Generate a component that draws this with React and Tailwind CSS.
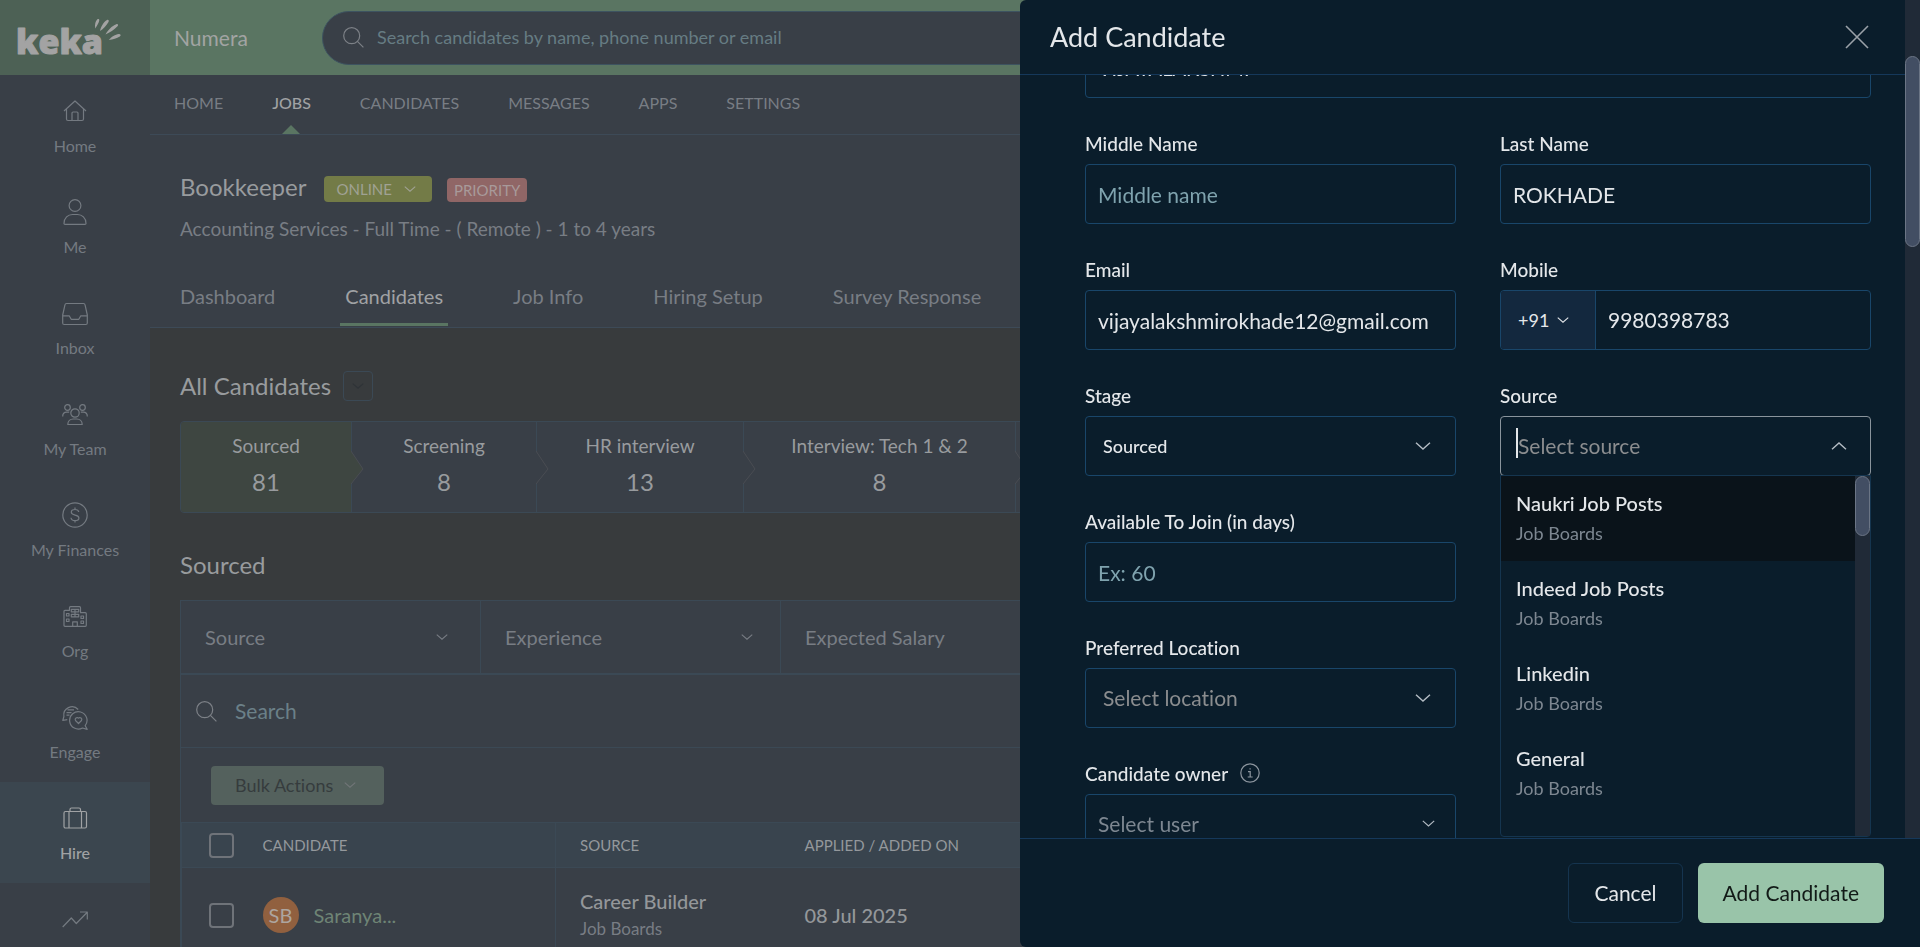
import React from 'react';

const Chevron = ({ up = false, className = 'w-4 h-2' }) => (
  <svg viewBox="0 0 16 8" fill="none" stroke="currentColor" strokeWidth="1.4" className={className} aria-hidden="true">
    <path d={up ? 'M1 7.2L8 1l7 6.2' : 'M1 .8L8 7l7-6.2'} />
  </svg>
);

const SearchIcon = () => (
  <svg viewBox="0 0 21 21" fill="none" stroke="currentColor" strokeWidth="1.2" className="w-[21px] h-[21px] text-[#7d8187] shrink-0" aria-hidden="true">
    <circle cx="8.7" cy="8.7" r="8" />
    <path d="M14.4 14.4L20.4 20.4" />
  </svg>
);

const NavIcon = ({ children }) => (
  <svg viewBox="0 0 26 26" fill="none" stroke="currentColor" strokeWidth="1.2" strokeLinejoin="round" className="w-[26px] h-[26px]" aria-hidden="true">
    {children}
  </svg>
);

const sideItems = [
  {
    label: 'Home',
    icon: (
      <>
        <path d="M2 13L13 3l11 10" />
        <path d="M4.5 11v10q0 1.5 1.5 1.5h14q1.500 0 1.500-1.500V11" />
        <path d="M10 22.500v-7.500q0-1 1-1h4q1 0 1 1v7.500" />
      </>
    ),
  },
  {
    label: 'Me',
    icon: (
      <>
        <circle cx="13" cy="6.500" r="5.900" />
        <path d="M2 24.500c0-5.500 4-9 8.500-9h5c4.500 0 8.500 3.500 8.500 9q0 .8-1 .8H3q-1 0-1-.8z" />
      </>
    ),
  },
  {
    label: 'Inbox',
    icon: (
      <>
        <path d="M4.500 3.500h17q1.300 0 1.500 1.200L25.300 15v8q0 1.500-1.500 1.500H2.200Q.7 24.500.7 23v-8L3 4.700q.2-1.200 1.500-1.200z" />
        <path d="M.7 15.800h6.500l2 3.500h7.600l2-3.500h6.500" />
      </>
    ),
  },
  {
    label: 'My Team',
    icon: (
      <>
        <circle cx="13" cy="12" r="4.200" />
        <circle cx="5.500" cy="6.500" r="2.800" />
        <circle cx="20.500" cy="6.500" r="2.800" />
        <path d="M.7 15.500c0-2.700 1.800-4.300 4-4.300h2.500M25.300 15.500c0-2.700-1.800-4.300-4-4.300h-2.500" />
        <path d="M5.800 23.500c0-3.500 2.500-5.500 5.500-5.500h3.400c3 0 5.500 2 5.500 5.500z" />
      </>
    ),
  },
  {
    label: 'My Finances',
    icon: (
      <>
        <circle cx="13" cy="13" r="12.200" />
        <path d="M16.800 10c-.3-1.700-1.800-2.500-3.800-2.500s-3.700 1-3.700 2.700c0 4 7.600 1.700 7.600 5.700 0 1.700-1.700 2.700-3.900 2.700s-3.800-1-4-2.800M13 5.500v2M13 18.600v2" />
      </>
    ),
  },
  {
    label: 'Org',
    icon: (
      <>
        <path d="M7.500 6.500V4.700q0-1 1-1h9q1 0 1 1v5h4.800q1 0 1 1v11.600q0 1-1 1H3q-1 0-1-1V8.500q0-1.200 1-1.200h4.500z" />
        <path d="M9.300 6.300h7.400v2.500H9.300zM9.300 11.300h7.400v2.500H9.300zM13 6.300v7.500M4.500 10.500h2.500v2.500H4.500zM4.500 16h2.500v2.500H4.500zM19 13h2.500v2.500H19zM19 18h2.500v2.500H19zM10.700 23.300v-4.500h4.600v4.500" />
      </>
    ),
  },
  {
    label: 'Engage',
    icon: (
      <>
        <path d="M16.200 5.500A8.300 8.300 0 0 0 1.900 12.500L.8 16.300l4.500-.6" />
        <path d="M5.500 5.800h6.500M4.500 8.600h5M4.500 11.200h3" />
        <path d="M23.200 21.700A8.700 8.700 0 1 0 20.500 24l4.700 1.300z" />
        <path d="M16.500 19.500l-3-3a1.900 1.900 0 0 1 3-2.300 1.900 1.900 0 0 1 3 2.300z" />
      </>
    ),
  },
  {
    label: 'Hire',
    active: true,
    icon: (
      <>
        <rect x="2" y="6.500" width="22.500" height="16.500" rx="1.500" />
        <path d="M7 6.500V23M19.500 6.500V23M8 6.500v-2q0-1.500 1.500-1.500h7.500q1.500 0 1.500 1.500v2" />
      </>
    ),
  },
  {
    label: '',
    icon: <path d="M.7 21l8.600-9 5 5.500L25 6.500M18 6h7.300v7.500" />,
  },
];

const mainNav = ['HOME', 'JOBS', 'CANDIDATES', 'MESSAGES', 'APPS', 'SETTINGS'];
const jobTabs = ['Dashboard', 'Candidates', 'Job Info', 'Hiring Setup', 'Survey Response'];

const stages = [
  { name: 'Sourced', count: 81 },
  { name: 'Screening', count: 8 },
  { name: 'HR interview', count: 13 },
  { name: 'Interview: Tech 1 & 2', count: 8 },
  { name: 'Offer', count: 2 },
];

const filters = ['Source', 'Experience', 'Expected Salary'];
const sources = ['Naukri Job Posts', 'Indeed Job Posts', 'Linkedin', 'General'];

function Logo() {
  return (
    <svg viewBox="0 0 150 75" className="w-[150px] h-[75px]" role="img" aria-label="keka">
      <text x="16" y="54" fontFamily="Open Sans" fontWeight="800" fontSize="34" fill="#a3a3a3" stroke="#a3a3a3" strokeWidth="1" strokeLinejoin="round">
        keka
      </text>
      <g fill="#a3a3a3">
        <path d="M95.200 28.500c-.6-4 .3-7.500 2-9 1.200-1 2.400-.2 2 1.200-.6 2.600-2.200 5-4 7.800z" />
        <path d="M100 31c1-4.500 3.800-9.500 7-11 1.500-.6 2.300.6 1.500 1.900C106.500 25.500 103.500 28.500 100 31z" />
        <path d="M105.500 34.500c2-4 6.500-8.800 10.800-10.300 1.800-.5 2.300 1 1.200 2.100-3.500 3.500-7.500 6.200-12 8.200z" />
        <path d="M108.800 40c2.400-3 6.500-5.700 10-6 2-.1 2.400 1.700 1 2.600-3 1.900-6.800 3.200-11 3.400z" />
      </g>
    </svg>
  );
}

function Sidebar() {
  return (
    <aside className="w-[150px] shrink-0 bg-[#393f47] flex flex-col">
      <div className="bg-[#4d6155] h-[75px] shrink-0">
        <Logo />
      </div>
      <nav className="flex flex-col">
        {sideItems.map((item, i) => (
          <a
            key={i}
            href="#"
            aria-label={item.label || 'Performance'}
            className={`h-[101px] shrink-0 flex flex-col items-center gap-[9px] pt-[23px] text-base leading-[26px] ${
              item.active ? 'bg-[#3b464f] text-[#a0a2a4] font-medium' : 'text-[#747a81]'
            }`}
          >
            <NavIcon>{item.icon}</NavIcon>
            <span>{item.label}</span>
          </a>
        ))}
      </nav>
    </aside>
  );
}

function TopBar() {
  return (
    <header className="h-[75px] shrink-0 bg-[#5a7562] flex items-center pl-6">
      <div className="w-[148px] text-[21px] leading-7 text-[#a2a4a3]">Numera</div>
      <label className="flex-1 mr-8 h-[54px] rounded-full border border-[#3d5360] bg-[#393f47] flex items-center gap-[13px] pl-5">
        <SearchIcon />
        <input
          type="text"
          placeholder="Search candidates by name, phone number or email"
          className="flex-1 bg-transparent outline-none text-[18px] placeholder:text-[#667c83]"
        />
      </label>
    </header>
  );
}

function JobHeader() {
  return (
    <div className="bg-[#393f47] shrink-0">
      <nav className="h-[60px] border-b border-[#3d4a57] flex gap-[49px] px-6 text-base leading-[56px]">
        {mainNav.map((name) => (
          <a key={name} href="#" className={`relative ${name === 'JOBS' ? 'text-[#a0a2a4] font-medium' : 'text-[#787d84]'}`}>
            {name}
            {name === 'JOBS' && (
              <span className="absolute bottom-0 inset-x-0 mx-auto w-0 h-0 border-x-9 border-x-transparent border-b-9 border-b-[#5a7562]" />
            )}
          </a>
        ))}
      </nav>

      <div className="h-[193px] border-b border-[#3d4a57] pl-[30px] flex flex-col">
        <div className="mt-9 flex items-end">
          <h1 className="text-[24px] leading-8 text-[#989b9e] mr-[18px]">Bookkeeper</h1>
          <button className="mb-px h-[26px] pl-3 pr-4 rounded bg-[#737b47] text-[#a0a294] text-[15px] leading-[26px] flex items-center gap-3">
            ONLINE <Chevron className="w-3 h-1.5" />
          </button>
          <span className="mb-px ml-[15px] h-6 px-[7px] rounded bg-[#906666] text-[#a89a9a] text-[15px] leading-6">PRIORITY</span>
        </div>
        <p className="mt-3 text-[19px] leading-7 text-[#787d84]">Accounting Services - Full Time - ( Remote ) - 1 to 4 years</p>
        <nav className="mt-auto mb-px flex gap-[60px] text-[20px] leading-7 -ml-[5px]">
          {jobTabs.map((tab) => (
            <a
              key={tab}
              href="#"
              className={`px-[5px] pb-[13px] border-b-3 ${
                tab === 'Candidates' ? 'border-[#5a7562] text-[#a0a2a4]' : 'border-transparent text-[#787d84]'
              }`}
            >
              {tab}
            </a>
          ))}
        </nav>
      </div>
    </div>
  );
}

function StageBar() {
  return (
    <div className="mt-5 h-[92px] rounded border border-[#3b4955] bg-[#393f47] grid grid-cols-[171px_185px_207px_272px_1fr] overflow-hidden">
      {stages.map((stage, i) => (
        <button
          key={stage.name}
          className={`relative pt-2.5 flex flex-col items-center gap-2 border-r border-[#3b4955] whitespace-nowrap text-[#989b9e] ${
            i === 0 ? 'bg-[#3e4641]' : ''
          }`}
        >
          <span className="text-[19px] leading-7">{stage.name}</span>
          <span className="text-[24px] leading-7">{stage.count}</span>
          <svg viewBox="0 0 13 36" className="absolute z-10 left-full top-7 w-[13px] h-9" aria-hidden="true">
            <path d="M0 1l12 18L0 34" fill={i === 0 ? '#3e4641' : '#393f47'} stroke="#4a4d53" />
          </svg>
        </button>
      ))}
    </div>
  );
}

function CandidateTable() {
  return (
    <table className="w-full table-fixed border-collapse text-left border-l border-[#3b4955]">
      <colgroup>
        <col className="w-[81px]" />
        <col className="w-[293px]" />
        <col className="w-[224px]" />
        <col />
      </colgroup>
      <thead>
        <tr className="h-[45px] bg-[#39444e] border-y border-[#3b4955] text-[15px] text-[#94989c]">
          <th className="pl-[27px]">
            <input type="checkbox" aria-label="Select all" className="block appearance-none size-[25px] rounded-sm border-2 border-[#6f7379]" />
          </th>
          <th className="font-normal border-r border-[#3b4955]">CANDIDATE</th>
          <th className="font-normal pl-6">SOURCE</th>
          <th className="font-normal pl-[25px]">APPLIED / ADDED ON</th>
        </tr>
      </thead>
      <tbody>
        <tr className="h-[95px] text-[20px] text-[#94979a]">
          <td className="pl-[27px]">
            <input type="checkbox" aria-label="Select Saranya" className="block appearance-none size-[25px] rounded-sm border-2 border-[#6f7379]" />
          </td>
          <td className="border-r border-[#3b4955]">
            <div className="flex items-center gap-[15px]">
              <span className="size-9 rounded-full bg-[#91603f] text-[#ada59f] flex items-center justify-center">SB</span>
              <a href="#" className="text-[#6e8475]">Saranya...</a>
            </div>
          </td>
          <td className="pl-6">
            <div className="leading-7 font-medium">Career Builder</div>
            <div className="text-[17px] leading-7 text-[#787d84]">Job Boards</div>
          </td>
          <td className="pl-[25px] font-medium">08 Jul 2025</td>
        </tr>
      </tbody>
    </table>
  );
}

function JobPage() {
  return (
    <main className="isolate flex-1 pl-[30px] pt-[42px] min-h-0 overflow-hidden">
      <div className="h-[31px] flex items-center gap-3">
        <h2 className="text-[24px] leading-8 text-[#989b9e]">All Candidates</h2>
        <button aria-label="Change candidate list" className="size-[30px] rounded border border-[#3b4955] text-[#2e3337] flex items-center justify-center">
          <Chevron className="w-3 h-1.5" />
        </button>
      </div>
      <StageBar />
      <h2 className="mt-9 text-[24px] leading-8 text-[#989b9e]">Sourced</h2>

      <div className="mt-[19px] border border-b-0 border-[#3b4955] bg-[#393f47]">
        <div className="h-[74px] flex border-b-2 border-[#3b4955]">
          {filters.map((name) => (
            <button key={name} className="w-[300px] border-r border-[#3b4955] pl-6 pr-[27px] first:pr-8 flex items-center justify-between text-[20px] text-[#787d84]">
              {name}
              <Chevron className="w-3 h-1.5" />
            </button>
          ))}
        </div>
        <label className="h-[73px] border-b border-[#3b4955] flex items-center gap-[18px] pl-[15px]">
          <SearchIcon />
          <input type="text" placeholder="Search" className="flex-1 bg-transparent outline-none text-[21px] placeholder:text-[#6b8088]" />
        </label>
        <div className="h-[74px] flex items-center pl-[30px]">
          <button className="h-[39px] px-6 rounded bg-[#54615d] text-[#363c3d] text-[18px] flex items-center gap-[11px]">
            Bulk Actions <Chevron className="w-3 h-1.5 mr-1 text-[#717678]" />
          </button>
        </div>
        <CandidateTable />
      </div>
    </main>
  );
}

const boxClass = 'w-full h-[60px] rounded border border-[#19466a] bg-transparent outline-none';
const labelClass = 'h-[35px] leading-[29px] text-[19px] font-medium text-[#e4e7ea] flex items-start gap-3';

function TextField({ id, label, value, placeholder }) {
  return (
    <div className="flex flex-col">
      <label htmlFor={id} className={labelClass}>{label}</label>
      <input id={id} type="text" defaultValue={value} placeholder={placeholder} className={`${boxClass} px-3 text-[21px] text-[#e4e7ea] placeholder:text-[#7fa3ae]`} />
    </div>
  );
}

function SelectField({ id, label, value, selectClass, chevronClass, icon }) {
  return (
    <div className="flex flex-col">
      <label htmlFor={id} className={labelClass}>
        {label}
        {icon}
      </label>
      <div className="relative">
        <select id={id} className={`${boxClass} appearance-none ${selectClass}`}>
          <option>{value}</option>
        </select>
        <Chevron className={`absolute top-[26px] pointer-events-none text-[#b4bcc4] ${chevronClass}`} />
      </div>
    </div>
  );
}

function SourceField() {
  return (
    <div className="relative flex flex-col">
      <label htmlFor="source" className={labelClass}>Source</label>
      <div className="h-[60px] rounded border border-[#8a949c] flex items-center px-[15px]">
        <span className="w-0.5 h-[30px] mb-1.5 bg-[#e4e7ea]" />
        <input
          id="source"
          role="combobox"
          aria-expanded="true"
          aria-controls="source-list"
          placeholder="Select source"
          className="flex-1 bg-transparent outline-none text-[21px] placeholder:text-[#8b8d8f]"
        />
        <Chevron up className="w-4 h-2 mr-2 text-[#b4bcc4]" />
      </div>

      <div className="absolute z-10 top-[94px] inset-x-0 h-[362px] rounded-b border border-[#15354f] bg-[#0a1d2b] flex">
        <ul id="source-list" role="listbox" className="flex-1 overflow-hidden">
          {sources.map((name, i) => (
            <li key={name} role="option" aria-selected={i === 0} className={`h-[85px] px-[15px] pt-3 ${i === 0 ? 'bg-[#0a131a]' : ''}`}>
              <div className="text-[20px] leading-[30px] text-[#e4e7ea] font-medium">{name}</div>
              <div className="text-[18px] leading-[31px] text-[#7d8791]">Job Boards</div>
            </li>
          ))}
        </ul>
        <div className="w-[15px] bg-[#202a37]">
          <div className="h-[60px] rounded-full border border-[#6b7585] bg-[#424e63]" />
        </div>
      </div>
    </div>
  );
}

const InfoIcon = () => (
  <svg viewBox="0 0 20 20" fill="none" stroke="currentColor" strokeWidth="1.2" className="size-5 mt-1 text-[#8c959e]" aria-hidden="true">
    <circle cx="10" cy="10" r="9.200" />
    <path d="M8 8.700h2.200v5M7.700 14h5M9.500 5.800h1.200" />
  </svg>
);

function CandidateForm() {
  return (
    <form className="flex-1 min-h-0 overflow-hidden pl-[65px] pr-[34px]">
      {/* scrolled past the first field */}
      <input type="text" aria-label="First Name" defaultValue="VIJAYALAKSHMI" className={`${boxClass} block -mt-[37px] px-3 text-[20px] text-[#e4e7ea]`} />
      <div className="mt-[31px] grid grid-cols-2 gap-x-11 gap-y-[31px]">
        <TextField id="middle" label="Middle Name" placeholder="Middle name" />
        <TextField id="last" label="Last Name" value="ROKHADE" />
        <TextField id="email" label="Email" value="vijayalakshmirokhade12@gmail.com" />
        <div className="flex flex-col">
          <label htmlFor="mobile" className={labelClass}>Mobile</label>
          <div className="h-[60px] rounded border border-[#19466a] flex overflow-hidden">
            <button type="button" className="w-[95px] shrink-0 bg-[#13283e] border-r border-[#19466a] pl-[17px] flex items-center gap-2 text-[18px] text-[#e4e7ea]">
              +91 <Chevron className="w-3 h-1.5" />
            </button>
            <input id="mobile" type="tel" defaultValue="9980398783" className="flex-1 min-w-0 bg-transparent outline-none px-3 text-[21px] text-[#e4e7ea]" />
          </div>
        </div>
        <SelectField id="stage" label="Stage" value="Sourced" selectClass="px-[17px] text-[18px] font-medium text-[#e4e7ea]" chevronClass="right-[25px] w-4 h-2" />
        <SourceField />
        <div className="col-start-1">
          <TextField id="join" label="Available To Join (in days)" placeholder="Ex: 60" />
        </div>
        <div className="col-start-1">
          <SelectField id="location" label="Preferred Location" value="Select location" selectClass="px-[17px] text-[21px] text-[#8b8d8f]" chevronClass="right-[25px] w-4 h-2" />
        </div>
        <div className="col-start-1">
          <SelectField id="owner" label="Candidate owner" value="Select user" icon={<InfoIcon />} selectClass="px-3 text-[21px] text-[#7d8791]" chevronClass="right-[21px] w-[13px] h-[7px]" />
        </div>
      </div>
    </form>
  );
}

function AddCandidateDrawer() {
  return (
    <section role="dialog" aria-label="Add Candidate" className="fixed inset-y-0 right-0 w-[900px] rounded-l-md bg-[#0a1d2b] flex flex-col overflow-hidden">
      <div className="flex-1 min-h-0 flex">
        <div className="flex-1 flex flex-col min-w-0">
          <div className="h-[75px] shrink-0 border-b border-[#15385a] pl-[30px] pr-9 flex items-center justify-between">
            <h2 className="text-[27px] leading-9 text-[#e4e7ea]">Add Candidate</h2>
            <button aria-label="Close">
              <svg viewBox="0 0 24 24" stroke="#9aa1a8" strokeWidth="1.6" className="size-6">
                <path d="M1 1l22 22M23 1L1 23" />
              </svg>
            </button>
          </div>
          <CandidateForm />
        </div>
        <div className="w-[15px] bg-[#202a37] pt-14">
          <div className="h-[191px] rounded-full border border-[#6b7585] bg-[#424e63]" />
        </div>
      </div>
      <footer className="h-[109px] shrink-0 border-t border-[#15385a] flex items-center justify-end gap-[15px] pr-9 text-[21px]">
        <button className="h-[60px] px-[25px] rounded-md border border-[#15344f] text-[#e4e7ea]">Cancel</button>
        <button className="h-[60px] px-[25px] rounded-md bg-[#99c4a9] text-[#121a17]">Add Candidate</button>
      </footer>
    </section>
  );
}

export default function App() {
  return (
    <div className="h-screen overflow-hidden flex bg-[#383b3d] font-['Lato','Open_Sans',sans-serif] [font-variant-ligatures:none]">
      <Sidebar />
      <div className="flex-1 min-w-0 flex flex-col">
        <TopBar />
        <JobHeader />
        <JobPage />
      </div>
      <AddCandidateDrawer />
    </div>
  );
}
